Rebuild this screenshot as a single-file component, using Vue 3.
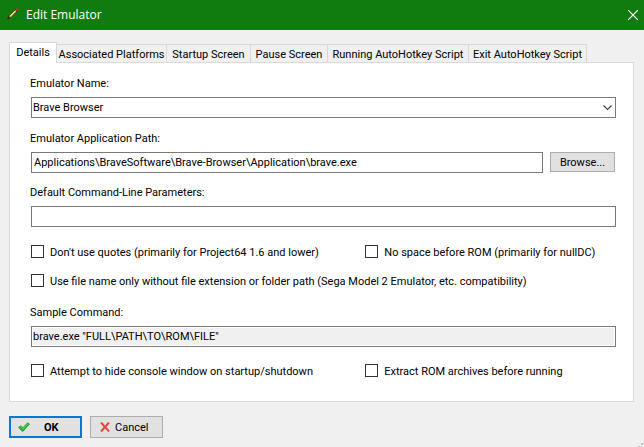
<script setup>
import { ref } from "vue";

const tabs = [
  "Details",
  "Associated Platforms",
  "Startup Screen",
  "Pause Screen",
  "Running AutoHotkey Script",
  "Exit AutoHotkey Script",
];
const activeTab = ref("Details");

const name = ref("Brave Browser");
const path = ref("Applications\\BraveSoftware\\Brave-Browser\\Application\\brave.exe");
const params = ref("");
const sample = ref('brave.exe "FULL\\PATH\\TO\\ROM\\FILE"');

const noQuotes = ref(false);
const noSpace = ref(false);
const fileNameOnly = ref(false);
const hideConsole = ref(false);
const extractRom = ref(false);
</script>

<template>
  <div class="window">
    <header class="titlebar">
      <svg class="pencil" viewBox="0 0 12 12">
        <path d="M0 11L2 7.5L8.5 1.2L10.5 3.2L4 9.5L1.5 11.5Z" fill="#2c2810" />
        <path d="M2.2 9.5L2.8 7.8L8.2 2.4L9.4 3.6L4 9Z" fill="#f0c95a" />
        <path d="M2.8 8L8.3 2.5" stroke="#fff4b8" stroke-width="0.8" fill="none" />
        <path d="M8.4 1.8L9.4 0.6L11.2 0.8L11.4 2.4L10.2 3.6Z" fill="#c8322c" />
      </svg>
      <h1>Edit Emulator</h1>
      <button class="close" type="button" aria-label="Close">
        <svg viewBox="0 0 10 10">
          <path d="M0 0L10 10M10 0L0 10" stroke="#fff" stroke-width="1.2" />
        </svg>
      </button>
    </header>

    <main class="body">
      <div class="tabs" role="tablist">
        <button
          v-for="tab in tabs"
          :key="tab"
          type="button"
          role="tab"
          class="tab"
          :class="{ active: tab === activeTab }"
          :aria-selected="tab === activeTab"
          @click="activeTab = tab"
        >
          {{ tab }}
        </button>
      </div>

      <section class="panel">
        <div class="field combo">
          <label for="name">Emulator Name:</label>
          <div class="row">
            <select id="name" v-model="name">
              <option>Brave Browser</option>
            </select>
            <svg class="chevron" viewBox="0 0 9 6">
              <path d="M0.5 0.5L4.5 4.5L8.5 0.5" fill="none" stroke="#444" stroke-width="1.2" />
            </svg>
          </div>
        </div>

        <div class="field">
          <label for="path">Emulator Application Path:</label>
          <div class="row">
            <input id="path" v-model="path" type="text" />
            <button class="btn browse" type="button">Browse...</button>
          </div>
        </div>

        <div class="field">
          <label for="params">Default Command-Line Parameters:</label>
          <div class="row">
            <input id="params" v-model="params" type="text" />
          </div>
        </div>

        <div class="checks">
          <label class="check"><input v-model="noQuotes" type="checkbox" />Don't use quotes (primarily for Project64 1.6 and lower)</label>
          <label class="check"><input v-model="noSpace" type="checkbox" />No space before ROM (primarily for nullDC)</label>
          <label class="check wide"><input v-model="fileNameOnly" type="checkbox" />Use file name only without file extension or folder path (Sega Model 2 Emulator, etc. compatibility)</label>
        </div>

        <div class="field">
          <label for="sample">Sample Command:</label>
          <div class="row">
            <input id="sample" class="sample" :value="sample" type="text" readonly />
          </div>
        </div>

        <div class="checks last">
          <label class="check"><input v-model="hideConsole" type="checkbox" />Attempt to hide console window on startup/shutdown</label>
          <label class="check"><input v-model="extractRom" type="checkbox" />Extract ROM archives before running</label>
        </div>
      </section>

      <footer class="actions">
        <button class="btn ok" type="button">
          <svg viewBox="0 0 12 10">
            <path d="M0.5 5.2L3 3.8L4.8 5.8L9.6 0.8L11.6 2L5.2 9.2L4 9.2Z" fill="#27b43a" stroke="#1d8f2e" stroke-width="0.6" />
            <path d="M2.6 4.8L4.8 7L10 1.8" fill="none" stroke="#5fdc62" stroke-width="0.8" />
          </svg>
          <span>OK</span>
        </button>
        <button class="btn cancel" type="button">
          <svg viewBox="0 0 10 10">
            <path d="M1 0.5L9 9.5M9 0.5L1 9.5" stroke="#e8453f" stroke-width="2" />
          </svg>
          <span>Cancel</span>
        </button>
      </footer>
    </main>

    <svg class="grip" viewBox="0 0 6 5">
      <path d="M3 1H5V3H3ZM0 4H2V5H0ZM3 4H5V5H3Z" fill="#bfbfbf" />
    </svg>
  </div>
</template>

<style>
body {
  margin: 0;
  background: #f0f0f0;
}
</style>

<style scoped>
.window {
  position: relative;
  display: flex;
  flex-direction: column;
  min-height: 100vh;
  background: #f0f0f0;
  color: #000;
  font-family: Roboto, Tahoma, sans-serif;
  font-size: 11px;
  line-height: 16px;
}

button,
input,
select {
  box-sizing: border-box;
  margin: 0;
  color: inherit;
  font: inherit;
}

.titlebar {
  display: flex;
  align-items: center;
  height: 30px;
  padding: 0 6px 0 7px;
  background: #107c10;
  color: #fff;
}

.pencil {
  width: 12px;
  height: 12px;
  margin: 0 7px 2px 0;
}

h1 {
  flex: 1;
  margin: 0;
  font-family: "Open Sans", "Noto Sans", sans-serif;
  font-size: 12px;
  font-weight: 400;
}

.close {
  display: flex;
  padding: 0;
  border: 0;
  background: none;
}

.close svg {
  width: 10px;
  height: 10px;
}

.body {
  display: flex;
  flex: 1;
  flex-direction: column;
  padding: 12px 10px 9px 9px;
}

.tabs {
  display: grid;
  grid-template-columns: 48px 109px 84px 77px 141px 119px;
  align-items: end;
  height: 20px;
}

.tab {
  height: 18px;
  padding: 2px 0 0;
  border: 1px solid #d9d9d9;
  border-width: 1px 0 0 1px;
  background: #f0f0f0;
  line-height: 14px;
  white-space: nowrap;
}

.tab:last-child {
  border-right-width: 1px;
}

.tab.active {
  position: relative;
  height: 21px;
  margin-bottom: -1px;
  padding: 0 0 1px;
  border-right-width: 1px;
  background: #fff;
}

.tab.active + .tab {
  border-left-width: 0;
}

.panel {
  flex: 1;
  padding: 13px 17px 0 21px;
  border: 1px solid #d9d9d9;
  background: #fff;
}

.field {
  margin-bottom: 12px;
}

.field.combo {
  margin-bottom: 13px;
}

.field label {
  display: block;
  margin: 0 0 5px -1px;
}

.row {
  position: relative;
  display: flex;
  gap: 7px;
}

.row input,
.row select {
  flex: 1;
  min-width: 0;
  height: 21px;
  padding: 0 2px;
  border: 1px solid #7a7a7a;
  border-radius: 0;
  background: #fff;
  appearance: none;
}

.row select,
.row .sample {
  padding: 0 1px;
}

.row .sample {
  background: #f0f0f0;
  box-shadow: inset 0 0 0 1px #fff;
}

.chevron {
  position: absolute;
  top: 8px;
  right: 4px;
  width: 9px;
  height: 6px;
  pointer-events: none;
}

.btn {
  display: flex;
  align-items: center;
  justify-content: center;
  padding: 0;
  border: 1px solid #adadad;
  background: #e1e1e1;
}

.browse {
  width: 65px;
  height: 20px;
  margin-right: 1px;
  padding-top: 2px;
}

.checks {
  display: grid;
  grid-template-columns: 4fr 3fr;
  row-gap: 13px;
  margin: 18px 0 15px;
}

.checks.last {
  margin-top: 17px;
}

.check {
  display: flex;
  align-items: flex-start;
  height: 16px;
  gap: 6px;
  white-space: nowrap;
}

.check input {
  width: 13px;
  height: 13px;
  border: 1px solid #333;
  background: #fff;
  appearance: none;
}

.check input:checked {
  background: #333;
  box-shadow: inset 0 0 0 2px #fff;
}

.wide {
  grid-column: 1 / -1;
}

.actions {
  display: flex;
  gap: 8px;
  margin-top: 14px;
}

.actions .btn {
  justify-content: flex-start;
  width: 73px;
  height: 22px;
}

.actions span {
  padding-top: 2px;
}

.actions .ok {
  padding-left: 7px;
  border: 2px solid #0078d7;
  font-weight: 700;
}

.ok svg {
  width: 12px;
  height: 10px;
  margin-right: 14px;
}

.actions .cancel {
  padding-left: 9px;
}

.cancel svg {
  width: 10px;
  height: 10px;
  margin-right: 5px;
}

.grip {
  position: absolute;
  right: 0;
  bottom: 0;
  width: 6px;
  height: 5px;
}
</style>
